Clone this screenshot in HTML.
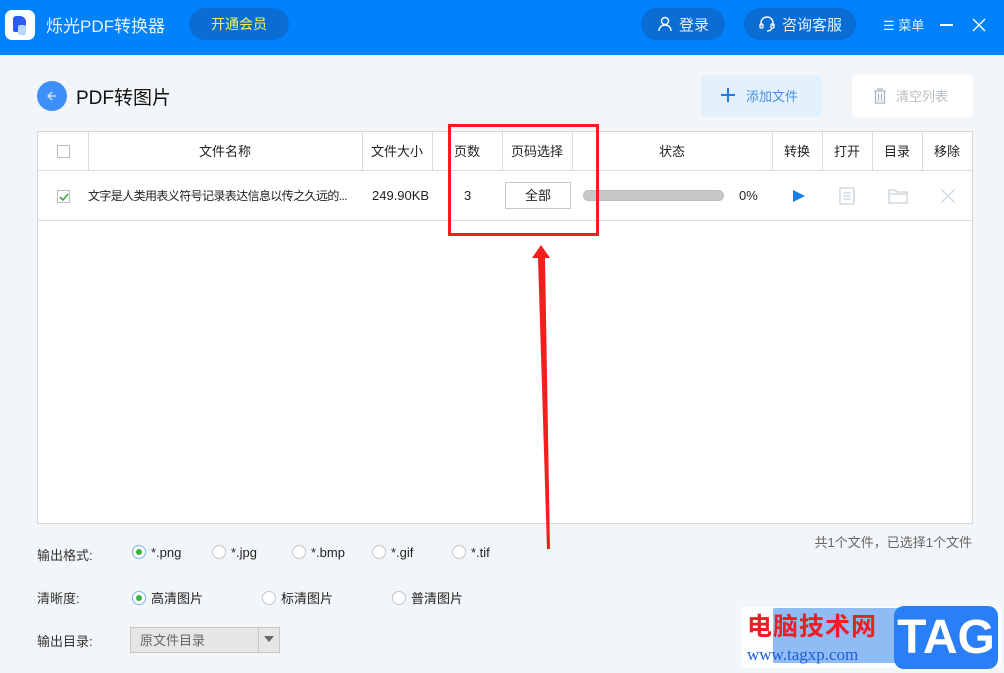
<!DOCTYPE html>
<html><head><meta charset="utf-8"><style>
*{margin:0;padding:0;box-sizing:border-box}
body{width:1004px;height:673px;overflow:hidden;background:#f3f6f8;font-family:"Liberation Sans","Noto Sans CJK SC",sans-serif;font-size:13px;color:#222;position:relative}
.a{position:absolute}
.hdr{left:0;top:0;width:1004px;height:55px;background:#0082fd}
.pill{background:#0a6dd4;border-radius:16px;color:#e8f0ff;font-size:15px;display:flex;align-items:center;justify-content:center}
.tb{left:37px;top:131px;width:936px;height:393px;background:#fff;border:1px solid #d6d6d6}
.vl{position:absolute;top:0;height:39px;width:1px;background:#dcdcdc}
.th{position:absolute;top:0;height:39px;line-height:39px;text-align:center;font-size:13px}
.rw{position:absolute;top:51px;height:26px;line-height:26px;font-size:13px}
.radio{display:inline-block;width:14px;height:14px;border:1px solid #bfc7cf;border-radius:50%;background:#fff;vertical-align:-2px;margin-right:5px;position:relative}
.radio.on{border-color:#7fb3ea}
.radio.on:after{content:"";position:absolute;left:3px;top:3px;width:6px;height:6px;border-radius:50%;background:#3ab53a}
</style></head><body>
<div class="a hdr"></div>
<div class="a" style="left:5px;top:10px;width:30px;height:30px;background:#fff;border-radius:7px"></div>
<div class="a" style="left:13px;top:16px;width:13px;height:16px;background:#2a5cf0;border-radius:3px 6px 6px 2px"></div>
<div class="a" style="left:18px;top:25px;width:8px;height:10px;background:#b9d6ff;border-radius:2px"></div>
<div class="a" style="left:46px;top:12px;color:#e8f1ff;font-size:17px">烁光PDF转换器</div>
<div class="a pill" style="left:189px;top:8px;width:100px;height:32px;color:#f5f06a;font-size:14px">开通会员</div>
<div class="a pill" style="left:641px;top:8px;width:84px;height:32px">
<svg width="16" height="16" viewBox="0 0 16 16" style="margin-right:6px"><circle cx="8" cy="5" r="3.5" fill="none" stroke="#fff" stroke-width="1.4"/><path d="M2 15c0-4 3-6 6-6s6 2 6 6" fill="none" stroke="#fff" stroke-width="1.4"/></svg>登录</div>
<div class="a pill" style="left:744px;top:8px;width:112px;height:32px">
<svg width="18" height="18" viewBox="0 0 18 18" style="margin-right:6px"><path d="M3 11V8a6 6 0 0 1 12 0v3" fill="none" stroke="#fff" stroke-width="1.4"/><rect x="2" y="9" width="3" height="4" rx="1" fill="none" stroke="#fff" stroke-width="1.3"/><rect x="13" y="9" width="3" height="4" rx="1" fill="none" stroke="#fff" stroke-width="1.3"/><path d="M14 13q-1 3-5 3" fill="none" stroke="#fff" stroke-width="1.3"/></svg>咨询客服</div>
<div class="a" style="left:883px;top:15px;color:#e8f0ff;font-size:13px">☰ 菜单</div>
<div class="a" style="left:940px;top:24px;width:13px;height:1.5px;background:#fff"></div>
<svg class="a" style="left:972px;top:18px" width="14" height="14"><path d="M1 1L13 13M13 1L1 13" stroke="#fff" stroke-width="1.4"/></svg>

<div class="a" style="left:37px;top:81px;width:30px;height:30px;border-radius:50%;background:#3d8ffb"></div>
<svg class="a" style="left:44px;top:88px" width="16" height="16"><path d="M12 8H4M8 4L4 8l4 4" fill="none" stroke="#dbe9ff" stroke-width="1.3"/></svg>
<div class="a" style="left:76px;top:83px;font-size:19px;color:#111">PDF转图片</div>

<div class="a" style="left:701px;top:75px;width:121px;height:42px;background:#e3f1fd;border-radius:4px"></div>
<svg class="a" style="left:720px;top:87px" width="16" height="16"><path d="M8 1v14M1 8h14" stroke="#1a7de8" stroke-width="2"/></svg>
<div class="a" style="left:746px;top:86px;color:#4a90e2;font-size:13px">添加文件</div>
<div class="a" style="left:852px;top:75px;width:121px;height:42px;background:#fff;border-radius:4px"></div>
<svg class="a" style="left:873px;top:88px" width="14" height="16"><path d="M1 3h12M5 3V1h4v2M2.5 4v11h9V4M5.5 6v7M8.5 6v7" fill="none" stroke="#aab4bd" stroke-width="1.2"/></svg>
<div class="a" style="left:896px;top:86px;color:#b8bec4;font-size:13px">清空列表</div>

<div class="a tb">
<div style="position:absolute;left:0;top:38px;width:934px;height:1px;background:#dcdcdc"></div>
<div style="position:absolute;left:0;top:88px;width:934px;height:1px;background:#dcdcdc"></div>
<div class="vl" style="left:50px"></div><div class="vl" style="left:324px"></div><div class="vl" style="left:394px"></div><div class="vl" style="left:464px"></div><div class="vl" style="left:534px"></div><div class="vl" style="left:734px"></div><div class="vl" style="left:784px"></div><div class="vl" style="left:834px"></div><div class="vl" style="left:884px"></div>
<div style="position:absolute;left:19px;top:13px;width:13px;height:13px;border:1px solid #bbb;background:#fff"></div>
<div class="th" style="left:50px;width:274px">文件名称</div>
<div class="th" style="left:324px;width:70px">文件大小</div>
<div class="th" style="left:394px;width:70px">页数</div>
<div class="th" style="left:464px;width:70px">页码选择</div>
<div class="th" style="left:534px;width:200px">状态</div>
<div class="th" style="left:734px;width:50px">转换</div>
<div class="th" style="left:784px;width:50px">打开</div>
<div class="th" style="left:834px;width:50px">目录</div>
<div class="th" style="left:884px;width:50px">移除</div>
<div style="position:absolute;left:19px;top:58px;width:13px;height:13px;border:1px solid #bbb;background:#fff"></div>
<svg style="position:absolute;left:20px;top:59px" width="12" height="12"><path d="M2 6l3 3 5-6" fill="none" stroke="#3aa83a" stroke-width="1.6"/></svg>
<div class="rw" style="left:50px;width:274px;overflow:hidden;white-space:nowrap;font-size:12px;letter-spacing:-0.6px">文字是人类用表义符号记录表达信息以传之久远的...</div>
<div class="rw" style="left:334px">249.90KB</div>
<div class="rw" style="left:426px">3</div>
<div style="position:absolute;left:467px;top:50px;width:66px;height:27px;border:1px solid #c8c8c8;text-align:center;line-height:25px;font-size:13px">全部</div>
<div style="position:absolute;left:545px;top:58px;width:141px;height:11px;border-radius:6px;background:#c8c8c8;border:1px solid #bdbdbd"></div>
<div class="rw" style="left:701px">0%</div>
<svg style="position:absolute;left:754px;top:57px" width="14" height="14"><path d="M1 1L13 7L1 13Z" fill="#1a7de8"/></svg>
<svg style="position:absolute;left:801px;top:55px" width="16" height="18"><rect x="1" y="1" width="14" height="16" rx="1" fill="none" stroke="#c8d0d6" stroke-width="1.3"/><path d="M4.5 6h7M4.5 9h7M4.5 12h7" stroke="#c8d0d6" stroke-width="1.2"/></svg>
<svg style="position:absolute;left:850px;top:56px" width="20" height="16"><path d="M1 2h6l2 2h10v11H1Z" fill="none" stroke="#c8d0d6" stroke-width="1.3"/><path d="M1 6h18" stroke="#c8d0d6" stroke-width="1.2"/></svg>
<svg style="position:absolute;left:902px;top:56px" width="16" height="16"><path d="M1 1L15 15M15 1L1 15" stroke="#d4dadf" stroke-width="1.4"/></svg>
</div>

<div class="a" style="right:32px;top:532px;color:#666;font-size:13px">共1个文件，已选择1个文件</div>
<div class="a" style="left:37px;top:545px;color:#333">输出格式:</div>
<div class="a" style="left:132px;top:545px"><span class="radio on"></span>*.png</div>
<div class="a" style="left:212px;top:545px"><span class="radio"></span>*.jpg</div>
<div class="a" style="left:292px;top:545px"><span class="radio"></span>*.bmp</div>
<div class="a" style="left:372px;top:545px"><span class="radio"></span>*.gif</div>
<div class="a" style="left:452px;top:545px"><span class="radio"></span>*.tif</div>
<div class="a" style="left:37px;top:588px;color:#333">清晰度:</div>
<div class="a" style="left:132px;top:588px"><span class="radio on"></span>高清图片</div>
<div class="a" style="left:262px;top:588px"><span class="radio"></span>标清图片</div>
<div class="a" style="left:392px;top:588px"><span class="radio"></span>普清图片</div>
<div class="a" style="left:37px;top:631px;color:#333">输出目录:</div>
<div class="a" style="left:130px;top:627px;width:150px;height:26px;border:1px solid #c6c6c6;background:#e6e6e6"></div>
<div class="a" style="left:140px;top:630px;color:#666">原文件目录</div>
<div class="a" style="left:258px;top:628px;width:1px;height:24px;background:#c6c6c6"></div>
<svg class="a" style="left:264px;top:636px" width="10" height="6"><path d="M0 0h10L5 6Z" fill="#666"/></svg>

<div class="a" style="left:448px;top:124px;width:151px;height:112px;border:3px solid #f41e1e"></div>
<svg class="a" style="left:520px;top:240px" width="50" height="320"><path d="M21 5L12 18H18L27 309H30L25 18H30Z" fill="#f41e1e"/></svg>

<div class="a" style="left:741px;top:607px;width:260px;height:61px;background:#fdfefe"></div>
<div class="a" style="left:773px;top:608px;width:200px;height:55px;background:#8fbcf5;border-radius:2px"></div>
<div class="a" style="left:747px;top:607px;color:#ee1c24;font-size:25px;font-weight:bold;font-family:'Noto Sans CJK SC',sans-serif;letter-spacing:1px;line-height:36px">电脑技术网</div>
<div class="a" style="left:747px;top:645px;color:#1b5fd6;font-size:17px;font-family:'Liberation Serif',serif">www.tagxp.com</div>
<div class="a" style="left:894px;top:606px;width:104px;height:63px;background:#2a7ff6;border-radius:10px;color:#fff;font-size:48px;font-weight:bold;text-align:center;line-height:63px">TAG</div>
</body></html>
